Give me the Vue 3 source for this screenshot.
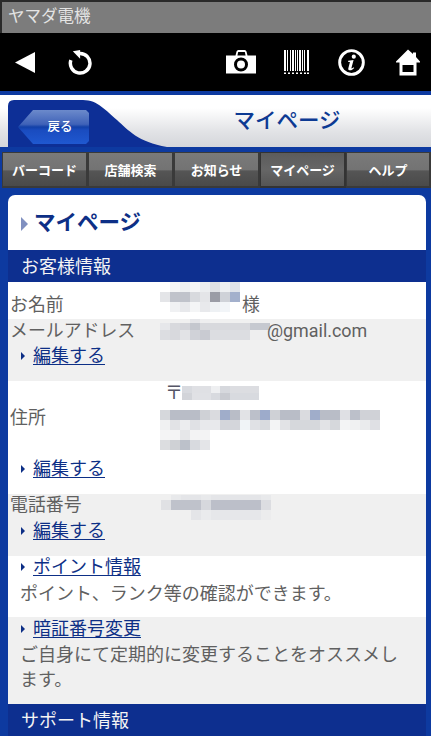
<script setup>
const tabs = ['バーコード', '店舗検索', 'お知らせ', 'マイページ', 'ヘルプ']
const mosaic = (rows) => rows.map((r) => r.split(' '))
const name = mosaic([
  'fff f4f5f6 eef0f2 f4f5f6 eceef0 dfe1e5 eef0f2 dfe3ea',
  'e4e5e8 c0c3cb c0c3cb d8dade e4e5e8 9a9ca6 cfd2d8 a3b0cc',
  'fff f0f1f3 e8e9ec f4f5f6 e8e9ec eef1f4 f2f5f8 fff'
])
const mail = mosaic([
  'f0f0f0 f0f0f0 f0f0f0 e4e5e8 eeeeef f0f0f0 f0f0f0 f0f0f0 f0f0f0 f0f0f0 f0f0f0',
  'e6e7ea d8d9dd d4d5da c4c7ce d8d9dd d8d9dd d8d9dd d8d9dd d8d9dd c6c9d0 c6c9d0',
  'dcdde1 d8d9dd e2e3e6 d0d2d8 c9cbd2 dcdde1 dcdde1 dcdde1 dcdde1 eeeeef eeeeef'
])
const zip = mosaic([
  'd8dadf dfe0e4 dfe0e4 eeeff1 d6d8dd dcdde1 dcdde1 dcdde1',
  'd2d4d9 e0e1e5 e0e1e5 d8dadf c9cbd1 d8dadf d8dadf d8dadf'
])
const addr = mosaic([
  'd6d8dc b9bdc7 b9bdc7 b9bdc7 cfd1d6 dadbdf a0adca b9bdc7 e2e3e6 bcc0ca 9dabcb cfd1d6 b9bdc7 b9bdc7 dadbdf a0adca b9bdc7 b9bdc7 dfe0e4 bcc0ca d0d2d7 d0d2d7',
  'f0f1f2 e2e3e6 ecedef e0e1e5 e8e9ec e8e9ec d4d6db d4d6db f0f4f7 e0e1e5 d9dbdf f3f4f5 e2e3e6 d6d8dc d6d8dc d6d8dc e2e3e6 d6d8dc f3f4f5 f0f1f2 eaebed dfe0e4',
  'f4f4f5 f4f4f5 e6e7e9 f3f3f4 f3f3f4',
  'dcdde0 cfd1d5 bcc1ca d8dadf e4e5e8'
])
const tel = mosaic([
  'f0f0f0 e8e9eb e4e5e8 e4e5e8 e8e9eb e4e5e8 e4e5e8 e4e5e8 e4e5e8 e4e5e8 e8e9eb',
  'e0e1e4 bfc2cb bfc2cb bfc2cb d6d8dd bcbfc9 bcbfc9 bcbfc9 bcbfc9 bcbfc9 dcdde1',
  'f0f0f0 f0f0f0 f0f0f0 e4e5e8 eaebed e6e7ea e6e7ea e6e7ea e6e7ea e6e7ea ececed'
])
</script>

<template>
  <div class="phone">
    <div class="titlebar">ヤマダ電機</div>

    <div class="toolbar">
      <svg class="ic back" viewBox="0 0 20 21"><path d="M20 0V21L0 10.5Z" /></svg>
      <svg class="ic reload" viewBox="0 0 26 26">
        <path d="M12.5 3.6A10.2 10.2 0 1 1 3 10.5" fill="none" stroke="#fff" stroke-width="3.6" />
        <path d="M5 1.2L12.6 0V9Z" />
      </svg>
      <span class="grow"></span>
      <svg class="ic camera" viewBox="0 0 30 24">
        <path fill-rule="evenodd" d="M0 5.5H9.5L10.5 1.5Q10.9 0 12.4 0H18.6Q20.1 0 20.5 1.5L21.5 5.5H30V23.5H0ZM12.2 2L11.4 5.5H19.6L18.8 2ZM15 7.5A7 7 0 1 0 15 21.5A7 7 0 1 0 15 7.5ZM15 10.5A4 4 0 1 1 15 18.5A4 4 0 1 1 15 10.5Z" />
      </svg>
      <svg class="ic barcode" viewBox="0 0 25 24">
        <path d="M0 0H2V21H0ZM3 0H4V21H3ZM6 0H7V21H6ZM8 0H10V21H8ZM11 0H12V21H11ZM13 0H14V21H13ZM15 0H17V21H15ZM18 0H19V21H18ZM20 0H21V21H20ZM23 0H25V21H23Z" />
        <path d="M0 22.5H2V24H0ZM4 22.5H6V24H4ZM8 22.5H10V24H8ZM12 22.5H14V24H12ZM16 22.5H18V24H16ZM20 22.5H22V24H20ZM23 22.5H25V24H23Z" />
      </svg>
      <svg class="ic info" viewBox="0 0 26 26">
        <circle cx="13" cy="13" r="11.4" fill="none" stroke="#fff" stroke-width="2.8" />
        <circle cx="15.2" cy="7.4" r="2" />
        <path d="M9.8 11.4L15 10.5L13 18C12.8 18.9 13.4 19 15.2 17.6L15.6 18.3C13.8 20.2 12.4 20.8 10.9 20.4C9.9 20.1 9.7 19.2 10 18.2L11.5 12.6L9.8 12.5Z" />
      </svg>
      <svg class="ic home" viewBox="0 0 24 26">
        <path fill-rule="evenodd" d="M12 0L17 4.6V3H20V7.6L24 12V13H20.5V26H3.5V13H0V12ZM6.5 15.5V22.5H17.5V15.5Z" />
      </svg>
    </div>

    <div class="headbar">
      <div class="wave">
        <svg viewBox="0 0 159 47" width="159" height="47" class="wave-svg">
          <defs>
            <linearGradient id="btn" x1="0" y1="0" x2="0" y2="1">
              <stop offset="0" stop-color="#6c8acb" />
              <stop offset="0.42" stop-color="#3f62b8" />
              <stop offset="0.5" stop-color="#1240a8" />
              <stop offset="0.6" stop-color="#1a4cc0" />
              <stop offset="1" stop-color="#1f58d0" />
            </linearGradient>
          </defs>
          <path d="M0 47V6Q0 0 6 0H75C90 0 98 11 109 20C120 30 130 42 159 47Z" fill="#0d2f96" />
          <path d="M10 27L25 10H78L81 13V41L78 44H25Z" fill="url(#btn)" />
        </svg>
        <span class="back-label">戻る</span>
      </div>
      <div class="head-title">マイページ</div>
    </div>

    <div class="tabs">
      <div v-for="(t, i) in tabs" :key="t" class="tab" :class="{ on: i === 3 }">{{ t }}</div>
    </div>

    <div class="stage">
      <div class="card">
        <h1 class="page-title"><span class="title-mark"></span>マイページ</h1>
        <h2 class="section">お客様情報</h2>

        <div class="row r-name">
          <span class="label">お名前</span>
          <div class="value inline">
            <div class="mosaic">
              <div v-for="(r, i) in name" :key="i" class="m-row">
                <i v-for="(c, j) in r" :key="j" :style="{ background: '#' + c }"></i>
              </div>
            </div>
            <span class="sama">様</span>
          </div>
        </div>

        <div class="row grey r-mail">
          <div class="split">
            <span class="label">メールアドレス</span>
            <div class="value inline">
              <div class="mosaic m-mail">
                <div v-for="(r, i) in mail" :key="i" class="m-row">
                  <i v-for="(c, j) in r" :key="j" :style="{ background: '#' + c }"></i>
                </div>
              </div>
              <span class="latin">@gmail.com</span>
            </div>
          </div>
          <div class="link"><a>編集する</a></div>
        </div>

        <div class="row r-addr">
          <div class="split">
            <span class="label">住所</span>
            <div class="value">
              <div class="zip">
                <span class="zip-mark">〒</span>
                <div class="mosaic">
                  <div v-for="(r, i) in zip" :key="i" class="m-row">
                    <i v-for="(c, j) in r" :key="j" :style="{ background: '#' + c }"></i>
                  </div>
                </div>
              </div>
              <div class="mosaic m-addr">
                <div v-for="(r, i) in addr" :key="i" class="m-row">
                  <i v-for="(c, j) in r" :key="j" :style="{ background: '#' + c }"></i>
                </div>
              </div>
            </div>
          </div>
          <div class="link"><a>編集する</a></div>
        </div>

        <div class="row grey r-tel">
          <div class="split">
            <span class="label">電話番号</span>
            <div class="value">
              <div class="mosaic m-tel">
                <div v-for="(r, i) in tel" :key="i" class="m-row">
                  <i v-for="(c, j) in r" :key="j" :style="{ background: '#' + c }"></i>
                </div>
              </div>
            </div>
          </div>
          <div class="link"><a>編集する</a></div>
        </div>

        <div class="row r-point">
          <div class="link"><a>ポイント情報</a></div>
          <p class="desc">ポイント、ランク等の確認ができます。</p>
        </div>

        <div class="row grey r-pin">
          <div class="link"><a>暗証番号変更</a></div>
          <p class="desc">ご自身にて定期的に変更することをオススメします。</p>
        </div>

        <h2 class="section">サポート情報</h2>
      </div>
    </div>
  </div>
</template>

<style>
html, body { margin: 0; background: #222; }
</style>

<style scoped>
.phone {
  width: 431px;
  height: 736px;
  overflow: hidden;
  box-sizing: border-box;
  padding-top: 2px;
  background: #2a2a2a;
  font-family: Roboto, "Noto Sans CJK JP", sans-serif;
  color: #606060;
}
.titlebar {
  height: 31px;
  line-height: 30px;
  margin-left: 2px;
  padding-left: 6px;
  background: #7c7c7c;
  color: #e4e4e4;
  font-size: 16.5px;
}
.toolbar {
  height: 58px;
  padding-left: 15px;
  padding-right: 11px;
  background: #000;
  display: flex;
  align-items: center;
}
.ic { fill: #fff; display: block; flex: none; }
.back { width: 20px; height: 21px; margin-right: 33px; }
.reload { width: 25px; height: 25px; }
.grow { flex: 1; }
.camera { width: 30px; height: 24px; margin-right: 28px; }
.barcode { width: 25px; height: 24px; margin-right: 29px; }
.info { width: 27px; height: 27px; margin-right: 31px; }
.home { width: 24px; height: 27px; }
.headbar {
  height: 52px;
  box-sizing: content-box;
  border-top: 4px solid #0d3aa0;
  background: linear-gradient(#fff 0%, #fff 25%, #e2e3e6 70%, #d4d6da 100%);
  display: flex;
  align-items: flex-end;
  padding-left: 8px;
}
.wave { position: relative; flex: none; width: 159px; height: 47px; }
.wave-svg { display: block; }
.back-label {
  position: absolute;
  left: 22px;
  top: 11px;
  width: 60px;
  text-align: center;
  line-height: 32px;
  font-size: 12.5px;
  font-weight: 500;
  color: #fff;
}
.head-title {
  flex: 1;
  align-self: center;
  padding-right: 24px;
  text-align: center;
  font-size: 21.5px;
  line-height: 30px;
  color: #0d3a93;
  font-weight: 500;
}
.tabs {
  height: 41px;
  box-sizing: border-box;
  padding-left: 2px;
  border-top: 5px solid #0d3aa0;
  background: #0d3aa0;
  display: grid;
  grid-template-columns: 86px 86px 86px 86px 85px;
}
.tab {
  height: 36px;
  box-sizing: border-box;
  border: 1px solid #3a3a3a;
  border-width: 1px 2px 2px 1px;
  background: linear-gradient(#7a7a7a 0%, #737373 50%, #555 55%, #4a4a4a 100%);
  color: #fff;
  font-size: 13px;
  font-weight: 700;
  line-height: 36px;
  text-align: center;
  white-space: nowrap;
}
.tab.on { border-color: #333; background: linear-gradient(#5c5c5c, #666 50%, #555 100%); }
.stage {
  padding: 7px 5px 0 8px;
  background: #0d3aa0;
  height: 548px;
  box-sizing: border-box;
}
.card {
  background: #fff;
  border-radius: 7px 7px 0 0;
  height: 100%;
  overflow: hidden;
}
.page-title {
  margin: 0;
  height: 55px;
  box-sizing: border-box;
  padding-left: 12px;
  font-size: 21.5px;
  line-height: 30px;
  font-weight: 700;
  color: #0d2f86;
  display: flex;
  align-items: center;
}
.title-mark {
  width: 0;
  height: 0;
  margin: 3px 6px 0 1px;
  border-left: 7px solid #8090c0;
  border-top: 7px solid transparent;
  border-bottom: 7px solid transparent;
}
.section {
  margin: 0;
  height: 32px;
  box-sizing: border-box;
  padding-left: 13px;
  background: #0d2f8f;
  color: #f4f4f4;
  font-size: 18px;
  font-weight: 400;
  line-height: 34px;
}
.row { display: flow-root; box-sizing: border-box; font-size: 17.9px; line-height: 24px; padding-left: 2px; }
.grey { background: #f0f0f0; }
.r-name { display: flex; height: 37px; padding-top: 11px; }
.r-mail { height: 62px; }
.r-addr { height: 113px; padding-top: 2px; }
.r-tel { height: 62px; }
.r-point { height: 61px; }
.r-pin { height: 87px; }
.label { width: 150px; flex: none; }
.split { display: flex; }
.r-addr .label { margin-top: 23px; }
.value { flex: 1; }
.inline { display: flex; align-items: flex-start; }
.mosaic { display: flex; flex-direction: column; flex: none; }
.m-row { display: flex; height: 10px; }
.m-row i { display: block; width: 10px; height: 100%; }
.r-name .inline { margin-top: -11px; }
.sama { margin-top: 11px; margin-left: 2px; }
.m-mail { margin-right: -3px; }
.m-mail .m-row:nth-child(1) { height: 4px; }
.m-mail .m-row:nth-child(2) { height: 7px; }
.latin { font-size: 17.9px; }
.zip { display: flex; align-items: center; height: 20px; padding-left: 6px; color: #556; font-size: 18px; }
.zip-mark { width: 17px; margin-left: -1px; }
.zip .m-row { height: 7px; }
.zip .m-row i { width: 9.6px; }
.m-addr { margin-top: 7px; }
.r-tel .split { height: 24px; margin-top: -1px; }
.m-tel { padding-top: 2px; margin-left: 1px; }
.m-tel .m-row:nth-child(1) { height: 5px; }
.link {
  position: relative;
  padding-left: 23px;
  height: 24px;
  margin-top: 1px;
  font-size: 18px;
}
.link::before {
  content: "";
  position: absolute;
  left: 11px;
  top: 8px;
  border-left: 4px solid #0d2f86;
  border-top: 4px solid transparent;
  border-bottom: 4px solid transparent;
}
.link a { color: #0d2f86; text-decoration: underline; text-underline-offset: 2px; }
.r-addr .link { margin-top: 7px; }
.r-tel .link { margin-top: 2px; }
.r-point .link { margin-top: -1px; }
.r-pin .link { margin-top: 0; }
.desc { margin: 1px 0 0; padding: 0 20px 0 10px; font-size: 18px; line-height: 25px; }
.r-point .desc { margin-top: 2px; }
</style>
